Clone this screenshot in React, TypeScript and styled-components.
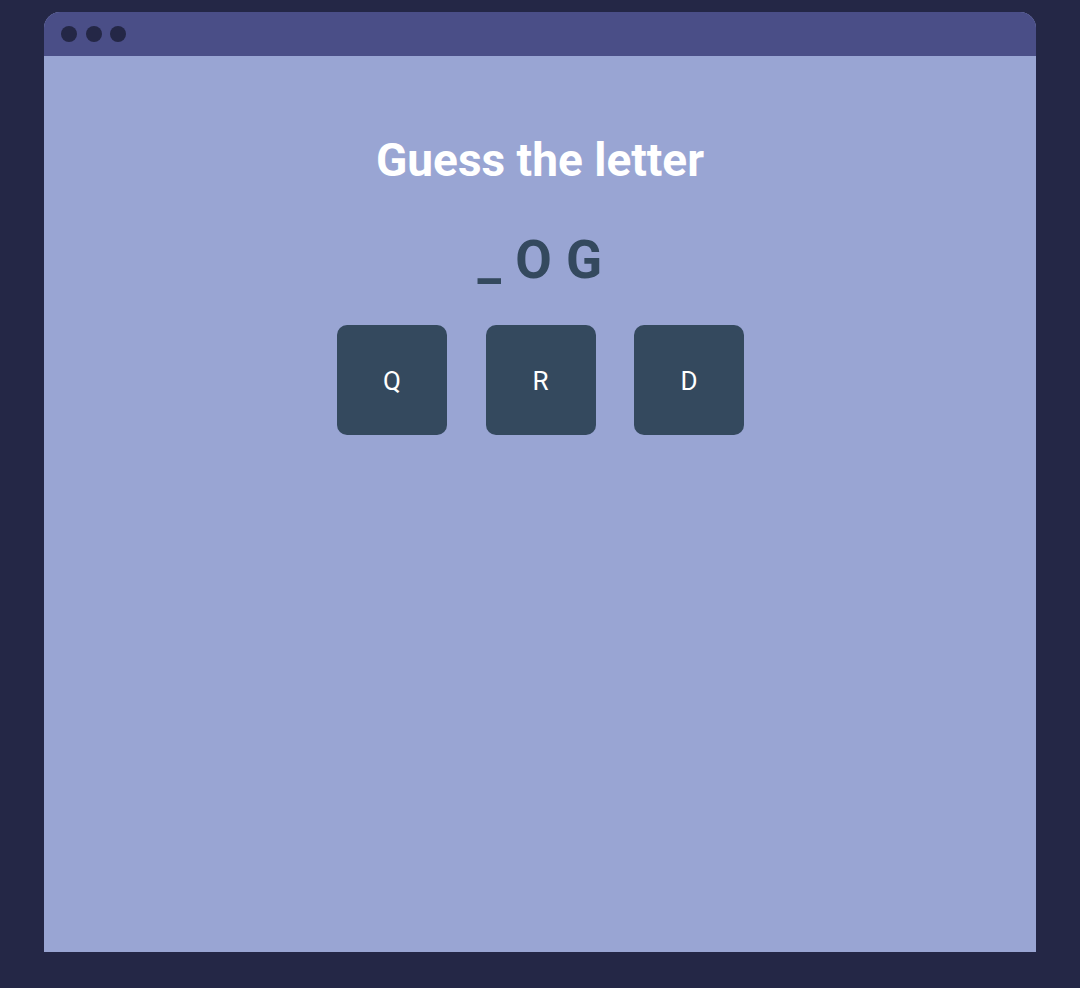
import React from "react";
import styled, { createGlobalStyle } from "styled-components";

const Global = createGlobalStyle`
  html, body { margin: 0; padding: 0; background: #242746; }
  body { font-family: Roboto, "Liberation Sans", sans-serif; }
`;

const Page = styled.div`
  padding: 12px 44px 36px;
  box-sizing: border-box;
  height: 988px;
`;

const Window = styled.div`
  display: flex;
  flex-direction: column;
  height: 940px;
  border-radius: 16px 16px 0 0;
  overflow: hidden;
  background: #99a5d3;
`;

const TitleBar = styled.div`
  display: flex;
  align-items: center;
  gap: 8.5px;
  height: 44px;
  padding-left: 17px;
  background: #4a4e87;
  flex-shrink: 0;
`;

const Dot = styled.span`
  width: 16px;
  height: 16px;
  border-radius: 50%;
  background: #242746;
`;

const Content = styled.main`
  display: flex;
  flex-direction: column;
  align-items: center;
  padding-top: 76px;
`;

const Title = styled.h1`
  margin: 0;
  color: #ffffff;
  font-size: 46px;
  font-weight: 700;
  line-height: 56px;
`;

const Word = styled.div`
  margin-top: 42px;
  color: #34495e;
  font-size: 53px;
  font-weight: 700;
  line-height: 60px;
  letter-spacing: 0.5px;
`;

const Choices = styled.div`
  display: flex;
  gap: 38.5px;
  margin-top: 35px;
  padding-left: 1px;
`;

const Choice = styled.button`
  width: 110px;
  height: 110px;
  border: none;
  border-radius: 10px;
  background: #34495e;
  color: #ffffff;
  font-family: Roboto, "Liberation Sans", sans-serif;
  font-size: 26px;
  padding: 2px 0 0;
  cursor: pointer;
`;

export default function App() {
  return (
    <>
      <Global />
      <Page>
        <Window>
          <TitleBar>
            <Dot />
            <Dot />
            <Dot />
          </TitleBar>
          <Content>
            <Title>Guess the letter</Title>
            <Word>_ O G</Word>
            <Choices>
              {["Q", "R", "D"].map((l) => (
                <Choice key={l}>{l}</Choice>
              ))}
            </Choices>
          </Content>
        </Window>
      </Page>
    </>
  );
}
